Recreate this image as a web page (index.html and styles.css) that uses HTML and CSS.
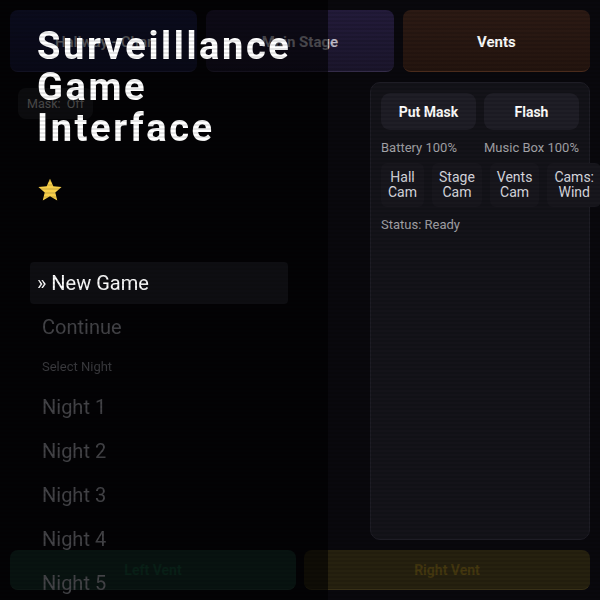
FILE: index.html
```html
<!DOCTYPE html>
<html lang="en">
<head>
    <meta charset="UTF-8">
    <meta name="viewport" content="width=device-width, initial-scale=1.0">
    <title>Surveillance Game</title>
    <link rel="stylesheet" href="styles.css">
</head>
<body>
    <div class="game">
        <div class="cams">
            <button class="cam cam-hall">Hallway - Char</button>
            <button class="cam cam-stage">Main Stage</button>
            <button class="cam cam-vents">Vents</button>
        </div>

        <div class="middle">
            <div class="view">
                <span class="mask-pill">Mask:&nbsp; Off</span>
            </div>
            <div class="panel">
                <div class="actions">
                    <button class="action">Put Mask</button>
                    <button class="action">Flash</button>
                </div>
                <div class="meters">
                    <span>Battery 100%</span>
                    <span>Music Box 100%</span>
                </div>
                <div class="cam-row">
                    <button class="small-cam">Hall<br>Cam</button>
                    <button class="small-cam">Stage<br>Cam</button>
                    <button class="small-cam">Vents<br>Cam</button>
                    <button class="small-cam">Cams:<br>Wind</button>
                </div>
                <div class="status">Status: Ready</div>
            </div>
        </div>

        <div class="vents">
            <button class="vent vent-left">Left Vent</button>
            <button class="vent vent-right">Right Vent</button>
        </div>
    </div>

    <!-- menu por encima del juego -->
    <div class="menu">
        <h1 class="title">Surveilllance Game Interface</h1>
        <div class="stars">
            <svg width="26" height="26" viewBox="0 0 24 24"><path d="M12 1.5l3.1 7.1 7.6.6-5.8 5 1.8 7.5L12 17.7l-6.7 4 1.8-7.5-5.8-5 7.6-.6z" fill="#f7cf4a"/></svg>
        </div>
        <ul class="menu-list">
            <li class="item selected">» New Game</li>
            <li class="item">Continue</li>
            <li class="label">Select Night</li>
            <li class="item">Night 1</li>
            <li class="item">Night 2</li>
            <li class="item">Night 3</li>
            <li class="item">Night 4</li>
            <li class="item">Night 5</li>
        </ul>
    </div>

    <div class="scanlines"></div>
</body>
</html>
```

FILE: styles.css
```css
html, body {
    margin: 0;
    height: 100%;
    overflow: hidden;
}
body {
    font-family: Roboto, "Noto Sans", sans-serif;
    background: #09080d;
    color: #ddd;
}
button {
    font-family: inherit;
    border: none;
    cursor: pointer;
}
.game {
    height: 100%;
    box-sizing: border-box;
    padding: 10px;
    display: flex;
    flex-direction: column;
    gap: 10px;
}
.cams {
    display: grid;
    grid-template-columns: 1fr 1fr 1fr;
    gap: 9px;
    height: 62px;
}
.cam {
    border-radius: 8px;
    padding-top: 3px;
    color: #fff;
    font-size: 15px;
    font-weight: 700;
    border-bottom: 1px solid rgba(255, 255, 255, 0.08);
}
.cam-hall {
    background: linear-gradient(#1c1e48, #17183a);
    color: #cfcfd8;
    font-weight: 600;
}
.cam-stage {
    background: linear-gradient(#231b3a, #1b162c);
    color: #bdbac6;
}
.cam-vents {
    background: linear-gradient(#2c1a14, #24150f);
    border-bottom: 1px solid #4a2b1c;
}
.middle {
    flex: 1;
    display: flex;
    gap: 10px;
    min-height: 0;
}
.view {
    flex: 1;
    padding: 6px 0 0 8px;
}
.mask-pill {
    display: inline-block;
    padding: 8px 9px;
    background: #202026;
    border-radius: 8px;
    font-size: 12.5px;
    color: #b8b8b8;
}
.panel {
    width: 220px;
    box-sizing: border-box;
    background: #141319;
    border: 1px solid #1e1d25;
    border-radius: 10px;
    padding: 10px 10px;
}
.actions {
    display: grid;
    grid-template-columns: 1fr 1fr;
    gap: 8px;
}
.action {
    height: 37px;
    background: #1f1e26;
    border-radius: 9px;
    color: #fff;
    font-size: 14px;
    font-weight: 700;
}
.meters {
    display: grid;
    grid-template-columns: 1fr 1fr;
    gap: 8px;
    margin-top: 10px;
    font-size: 13px;
    color: #a3a3a8;
}
.cam-row {
    display: flex;
    gap: 8px;
    margin-top: 8px;
    margin-right: -30px;
}
.small-cam {
    background: #18171d;
    border-radius: 6px;
    padding: 7px 7px;
    color: #dcdce0;
    font-size: 14px;
    line-height: 15px;
}
.status {
    margin-top: 10px;
    font-size: 13px;
    color: #a3a3a8;
}
.vents {
    display: grid;
    grid-template-columns: 1fr 1fr;
    gap: 8px;
    height: 40px;
}
.vent {
    border-radius: 8px;
    font-size: 14px;
    font-weight: 700;
}
.vent-left {
    background: #15302a;
    color: #17503a;
    border-bottom: 1px solid #244238;
}
.vent-right {
    background: #26210f;
    color: #45380f;
    border-bottom: 1px solid #3f361a;
}

.menu {
    position: fixed;
    top: 0;
    left: 0;
    bottom: 0;
    width: 328px;
    box-sizing: border-box;
    padding: 26px 30px 0 30px;
    background: rgba(0, 0, 0, 0.6);
}
.title {
    margin: 0;
    padding-left: 7px;
    font-size: 38px;
    line-height: 41px;
    font-weight: 700;
    letter-spacing: 2.6px;
    color: #fff;
}
.stars {
    margin-top: 28px;
    padding-left: 7px;
    height: 26px;
}
.menu-list {
    list-style: none;
    margin: 59px 0 0;
    padding: 0;
    width: 258px;
    display: flex;
    flex-direction: column;
    gap: 2px;
}
.item {
    height: 42px;
    line-height: 42px;
    padding-left: 12px;
    font-size: 20px;
    color: #444448;
    border-radius: 4px;
}
.item.selected {
    padding-left: 7px;
    color: #fff;
    background: #0e0e12;
}
.label {
    height: 34px;
    line-height: 34px;
    padding-left: 12px;
    font-size: 13px;
    color: #3a3a3e;
}
.scanlines {
    position: fixed;
    inset: 0;
    pointer-events: none;
    background: repeating-linear-gradient(rgba(0, 0, 0, 0.1) 0 2px, transparent 2px 4px);
}
```
